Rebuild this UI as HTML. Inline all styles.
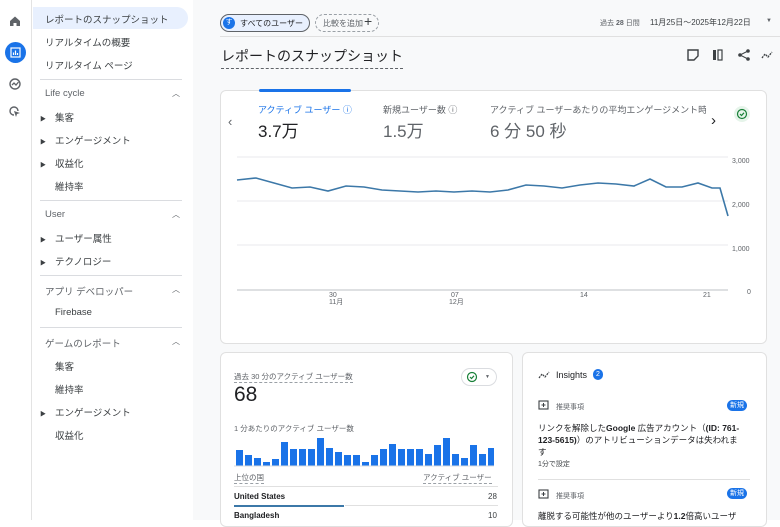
<!DOCTYPE html>
<html><head><meta charset="utf-8"><style>
*{box-sizing:border-box;margin:0;padding:0}
body{width:780px;height:520px;overflow:hidden;background:#fff;font-family:"Liberation Sans","Noto Sans CJK JP",sans-serif;color:#3c4043;position:relative}
.abs{position:absolute}
.rail{left:0;top:0;width:32px;height:520px;background:#fff;border-right:1px solid #e3e3e3}
.nav{left:33px;top:0;width:160px;height:520px;background:#fff}
.nav .it{position:absolute;left:12px;font-size:9.5px;color:#3c4043}
.nav .sec{position:absolute;left:12px;font-size:9.5px;color:#5f6368}
.nav .hr{position:absolute;left:7px;width:142px;height:1px;background:#dadce0}
.nav .car{position:absolute;left:139px;font-size:8px;color:#5f6368}
.main{left:193px;top:0;width:587px;height:520px;background:#f8f9fa}
.card{position:absolute;background:#fff;border:1px solid #e0e0e0;border-radius:6px}
.tri{position:absolute;left:7px;font-size:6px;color:#3c4043}
</style></head><body>
<div class="abs rail">
 <svg class="abs" style="left:8px;top:14px" width="14" height="14" viewBox="0 0 14 14"><path d="M2 7L7 2.5 12 7V12H8.5V9H5.5V12H2Z" fill="#5f6368"/></svg>
 <div class="abs" style="left:5px;top:42px;width:21px;height:21px;border-radius:50%;background:#1a73e8"></div>
 <svg class="abs" style="left:10px;top:47px" width="11" height="11" viewBox="0 0 11 11"><rect x="1" y="1" width="9" height="9" fill="none" stroke="#fff" stroke-width="1.2"/><path d="M3.5 8V5.5M5.5 8V3.5M7.5 8V6" stroke="#fff" stroke-width="1.2"/></svg>
 <svg class="abs" style="left:8px;top:77px" width="14" height="14" viewBox="0 0 14 14"><circle cx="7" cy="7" r="5" fill="none" stroke="#5f6368" stroke-width="1.4"/><path d="M4 8L6 6 8 8 10.5 5" fill="none" stroke="#5f6368" stroke-width="1.3"/></svg>
 <svg class="abs" style="left:8px;top:105px" width="14" height="14" viewBox="0 0 14 14"><path d="M10 6A4 4 0 1 0 6 10" fill="none" stroke="#5f6368" stroke-width="1.4"/><path d="M6 6L12 8 9 9 8 12Z" fill="#5f6368"/></svg>
</div>
<div class="abs nav">
 <div class="abs" style="left:0;top:7px;width:155px;height:22px;background:#e8f0fe;border-radius:0 11px 11px 0"></div>
 <div class="it" style="top:12px">レポートのスナップショット</div>
 <div class="it" style="top:35px">リアルタイムの概要</div>
 <div class="it" style="top:58px">リアルタイム ページ</div>
 <div class="hr" style="top:79px"></div>
 <div class="sec" style="top:88px">Life cycle</div><div class="car" style="top:88px">︿</div>
 <div class="tri" style="top:114px">▶</div><div class="it" style="top:110px;left:22px">集客</div>
 <div class="tri" style="top:137px">▶</div><div class="it" style="top:133px;left:22px">エンゲージメント</div>
 <div class="tri" style="top:160px">▶</div><div class="it" style="top:156px;left:22px">収益化</div>
 <div class="it" style="top:179px;left:22px">維持率</div>
 <div class="hr" style="top:200px"></div>
 <div class="sec" style="top:209px">User</div><div class="car" style="top:209px">︿</div>
 <div class="tri" style="top:235px">▶</div><div class="it" style="top:231px;left:22px">ユーザー属性</div>
 <div class="tri" style="top:258px">▶</div><div class="it" style="top:254px;left:22px">テクノロジー</div>
 <div class="hr" style="top:275px"></div>
 <div class="sec" style="top:284px">アプリ デベロッパー</div><div class="car" style="top:284px">︿</div>
 <div class="it" style="top:307px;left:22px">Firebase</div>
 <div class="hr" style="top:327px"></div>
 <div class="sec" style="top:336px">ゲームのレポート</div><div class="car" style="top:336px">︿</div>
 <div class="it" style="top:359px;left:22px">集客</div>
 <div class="it" style="top:382px;left:22px">維持率</div>
 <div class="tri" style="top:409px">▶</div><div class="it" style="top:405px;left:22px">エンゲージメント</div>
 <div class="it" style="top:428px;left:22px">収益化</div>
</div>
<div class="abs main"></div>
<div class="abs" style="left:220px;top:14px;width:90px;height:18px;border:1px solid #5f6368;border-radius:9px;background:#e8f0fe"></div>
<div class="abs" style="left:223px;top:17px;width:12px;height:12px;border-radius:50%;background:#1a73e8;color:#fff;font-size:7px;text-align:center;line-height:12px">す</div>
<div class="abs" style="left:240px;top:18px;font-size:8px;color:#202124">すべてのユーザー</div>
<div class="abs" style="left:315px;top:14px;width:64px;height:18px;border:1px dashed #9aa0a6;border-radius:9px"></div>
<div class="abs" style="left:323px;top:18px;font-size:8px;color:#5f6368">比較を追加</div>
<div class="abs" style="left:364px;top:13px;font-size:14px;color:#3c4043">+</div>
<div class="abs" style="left:220px;top:36px;width:560px;height:1px;background:#e0e0e0"></div>
<div class="abs" style="left:600px;top:18px;font-size:7px;color:#5f6368">過去 <b>28</b> 日間</div>
<div class="abs" style="left:650px;top:17px;font-size:8px;color:#3c4043">11月25日～2025年12月22日</div>
<div class="abs" style="left:766px;top:18px;font-size:6px;color:#5f6368">▼</div>
<div class="abs" style="left:221px;top:46px;font-size:14px;color:#202124;border-bottom:1px dashed #5f6368;padding-bottom:2px">レポートのスナップショット</div>
<svg class="abs" style="left:686px;top:48px" width="90" height="14" viewBox="0 0 90 14"><path d="M2 2H12V8L8 12H2Z" fill="none" stroke="#3c4043" stroke-width="1.4"/><rect x="27" y="2" width="3" height="10" fill="#3c4043"/><rect x="32" y="2" width="4" height="10" fill="none" stroke="#3c4043" stroke-width="1.2"/><circle cx="62" cy="3" r="1.8" fill="#3c4043"/><circle cx="54" cy="7" r="1.8" fill="#3c4043"/><circle cx="62" cy="11" r="1.8" fill="#3c4043"/><path d="M62 3L54 7 62 11" fill="none" stroke="#3c4043" stroke-width="1"/><path d="M76 10L79 6 82 9 86 4" fill="none" stroke="#3c4043" stroke-width="1.3" stroke-dasharray="2 1"/></svg>
<div class="card" style="left:220px;top:90px;width:547px;height:254px"></div>
<div class="abs" style="left:259px;top:89px;width:92px;height:3px;background:#1a73e8;border-radius:2px"></div>
<div class="abs" style="left:228px;top:114px;font-size:13px;color:#5f6368">‹</div>
<div class="abs" style="left:258px;top:103px;font-size:9px;color:#1a73e8">アクティブ ユーザー ⓘ</div>
<div class="abs" style="left:258px;top:117px;font-size:17px;color:#202124">3.7万</div>
<div class="abs" style="left:383px;top:103px;font-size:9px;color:#5f6368">新規ユーザー数 ⓘ</div>
<div class="abs" style="left:383px;top:117px;font-size:17px;color:#5f6368">1.5万</div>
<div class="abs" style="left:490px;top:103px;font-size:9px;color:#5f6368;width:216px;overflow:hidden;white-space:nowrap">アクティブ ユーザーあたりの平均エンゲージメント時間</div>
<div class="abs" style="left:490px;top:117px;font-size:17px;color:#5f6368">6 分 50 秒</div>
<div class="abs" style="left:711px;top:112px;font-size:15px;color:#202124">›</div>
<div class="abs" style="left:734px;top:106px;width:16px;height:16px;border-radius:50%;background:#e6f4ea"></div>
<svg class="abs" style="left:736px;top:108px" width="12" height="12" viewBox="0 0 12 12"><circle cx="6" cy="6" r="4.5" fill="none" stroke="#188038" stroke-width="1.2"/><path d="M4 6L5.5 7.5 8 4.8" fill="none" stroke="#188038" stroke-width="1.2"/></svg>
<svg class="abs" style="left:220px;top:150px" width="547" height="160" viewBox="0 0 547 160">
 <g stroke="#e8eaed" stroke-width="1"><line x1="17" y1="7" x2="508" y2="7"/><line x1="17" y1="51" x2="508" y2="51"/><line x1="17" y1="95" x2="508" y2="95"/><line x1="17" y1="140" x2="508" y2="140" stroke="#bdc1c6"/></g>
 <g font-size="7" fill="#5f6368" font-family="Liberation Sans"><text x="512" y="13">3,000</text><text x="512" y="57">2,000</text><text x="512" y="101">1,000</text><text x="527" y="144">0</text>
 <text x="109" y="147">30</text><text x="109" y="154">11月</text><text x="231" y="147">07</text><text x="229" y="154">12月</text><text x="360" y="147">14</text><text x="483" y="147">21</text></g>
 <polyline fill="none" stroke="#3c78a8" stroke-width="1.6" points="17,30 36,28 54,33 72,38 90,37 108,41 126,36 144,37 162,40 180,41 198,42 216,41 234,42 252,41 270,42 288,40 306,35 324,36 342,38 360,35 378,33 396,34 414,36 430,29 446,37 462,37 478,33 492,38 500,38 508,66"/>
</svg>
<div class="card" style="left:220px;top:352px;width:293px;height:175px"></div>
<div class="abs" style="left:234px;top:371px;font-size:7.5px;color:#5f6368;border-bottom:1px dashed #9aa0a6">過去 30 分のアクティブ ユーザー数</div>
<div class="abs" style="left:234px;top:383px;font-size:21px;color:#202124">68</div>
<div class="abs" style="left:461px;top:368px;width:36px;height:18px;border:1px solid #dadce0;border-radius:9px"></div>
<svg class="abs" style="left:466px;top:371px" width="12" height="12"><circle cx="6" cy="6" r="4.5" fill="none" stroke="#188038" stroke-width="1.2"/><path d="M4 6L5.5 7.5 8 4.8" fill="none" stroke="#188038" stroke-width="1.2"/></svg>
<div class="abs" style="left:485px;top:374px;font-size:5px;color:#5f6368">▼</div>
<div class="abs" style="left:234px;top:423px;font-size:7.5px;color:#5f6368">1 分あたりのアクティブ ユーザー数</div>
<svg class="abs" style="left:214px;top:430px" width="280" height="40"><g fill="#1a73e8">
<rect x="22" y="20" width="7" height="16"/><rect x="31" y="25" width="7" height="11"/><rect x="40" y="28" width="7" height="8"/><rect x="49" y="32" width="7" height="4"/><rect x="58" y="29" width="7" height="7"/><rect x="67" y="12" width="7" height="24"/><rect x="76" y="19" width="7" height="17"/><rect x="85" y="19" width="7" height="17"/><rect x="94" y="19" width="7" height="17"/><rect x="103" y="8" width="7" height="28"/><rect x="112" y="18" width="7" height="18"/><rect x="121" y="22" width="7" height="14"/><rect x="130" y="25" width="7" height="11"/><rect x="139" y="25" width="7" height="11"/><rect x="148" y="32" width="7" height="4"/><rect x="157" y="25" width="7" height="11"/><rect x="166" y="19" width="7" height="17"/><rect x="175" y="14" width="7" height="22"/><rect x="184" y="19" width="7" height="17"/><rect x="193" y="19" width="7" height="17"/><rect x="202" y="19" width="7" height="17"/><rect x="211" y="24" width="7" height="12"/><rect x="220" y="15" width="7" height="21"/><rect x="229" y="8" width="7" height="28"/><rect x="238" y="24" width="7" height="12"/><rect x="247" y="28" width="7" height="8"/><rect x="256" y="15" width="7" height="21"/><rect x="265" y="24" width="7" height="12"/><rect x="274" y="18" width="6" height="18"/></g><line x1="20" y1="36" x2="280" y2="36" stroke="#dadce0"/></svg>
<div class="abs" style="left:234px;top:472px;font-size:7.5px;color:#5f6368;border-bottom:1px dashed #9aa0a6">上位の国</div>
<div class="abs" style="left:423px;top:472px;font-size:7.5px;color:#5f6368;border-bottom:1px dashed #9aa0a6">アクティブ ユーザー</div>
<div class="abs" style="left:234px;top:486px;width:264px;height:1px;background:#e0e0e0"></div>
<div class="abs" style="left:234px;top:492px;font-size:8px;color:#202124;font-weight:bold">United States</div>
<div class="abs" style="left:488px;top:492px;font-size:8px;color:#3c4043">28</div>
<div class="abs" style="left:234px;top:505px;width:110px;height:2px;background:#3c78a8"></div>
<div class="abs" style="left:345px;top:505px;width:153px;height:1px;background:#e0e0e0"></div>
<div class="abs" style="left:234px;top:511px;font-size:8px;color:#202124;font-weight:bold">Bangladesh</div>
<div class="abs" style="left:488px;top:511px;font-size:8px;color:#3c4043">10</div>
<div class="card" style="left:522px;top:352px;width:245px;height:175px"></div>
<svg class="abs" style="left:538px;top:370px" width="12" height="10"><path d="M1 8L4 4 7 7 11 2" fill="none" stroke="#3c4043" stroke-width="1.2" stroke-dasharray="2 1"/></svg>
<div class="abs" style="left:556px;top:370px;font-size:9px;color:#202124">Insights</div>
<div class="abs" style="left:593px;top:369px;width:10px;height:11px;border-radius:5px;background:#1a73e8;color:#fff;font-size:7px;text-align:center;line-height:11px">2</div>
<svg class="abs" style="left:538px;top:400px" width="11" height="11"><rect x="1" y="1" width="9" height="8" fill="none" stroke="#3c4043" stroke-width="1.1"/><path d="M5.5 3V7M3.5 5H7.5" stroke="#3c4043" stroke-width="1"/></svg>
<div class="abs" style="left:556px;top:402px;font-size:7px;color:#5f6368">推奨事項</div>
<div class="abs" style="left:727px;top:400px;width:20px;height:11px;border-radius:6px;background:#1a73e8;color:#fff;font-size:7px;text-align:center;line-height:11px">新規</div>
<div class="abs" style="left:538px;top:422px;width:206px;font-size:8.5px;line-height:12px;color:#202124">リンクを解除した<b>Google</b> 広告アカウント（<b>(ID: 761-123-5615)</b>）のアトリビューションデータは失われます</div>
<div class="abs" style="left:538px;top:459px;font-size:7px;color:#3c4043">1分で設定</div>
<div class="abs" style="left:538px;top:479px;width:212px;height:1px;background:#e0e0e0"></div>
<svg class="abs" style="left:538px;top:489px" width="11" height="11"><rect x="1" y="1" width="9" height="8" fill="none" stroke="#3c4043" stroke-width="1.1"/><path d="M5.5 3V7M3.5 5H7.5" stroke="#3c4043" stroke-width="1"/></svg>
<div class="abs" style="left:556px;top:491px;font-size:7px;color:#5f6368">推奨事項</div>
<div class="abs" style="left:727px;top:488px;width:20px;height:11px;border-radius:6px;background:#1a73e8;color:#fff;font-size:7px;text-align:center;line-height:11px">新規</div>
<div class="abs" style="left:538px;top:510px;width:215px;font-size:8.5px;color:#202124;white-space:nowrap;overflow:hidden">離脱する可能性が他のユーザーより<b>1.2</b>倍高いユーザ</div>
</body></html>
